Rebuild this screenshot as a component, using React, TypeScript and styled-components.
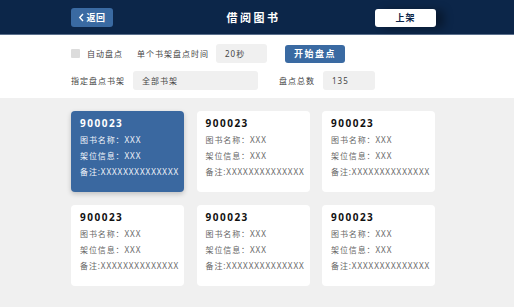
import styled, { createGlobalStyle } from 'styled-components'

const GlobalStyle = createGlobalStyle`
  html, body {
    margin: 0;
    padding: 0;
    background: #f0f0f0;
  }
  body {
    font-family: "Noto Sans", "Noto Sans CJK SC", sans-serif;
  }
`

const Page = styled.div`
  width: 514px;
  height: 307px;
  display: flex;
  flex-direction: column;
  background: #f0f0f0;
  overflow: hidden;
`

const Header = styled.header`
  height: 34px;
  display: grid;
  grid-template-columns: 1fr auto 1fr;
  align-items: center;
  padding: 0 78px 0 71px;
  background: #0c2649;
  border-bottom: 1px solid #5a6f8c;
`

const BackButton = styled.button`
  justify-self: start;
  width: 42px;
  height: 19px;
  display: flex;
  align-items: center;
  justify-content: center;
  gap: 1px;
  padding: 0;
  border: none;
  border-radius: 3px;
  background: #3a6aa2;
  color: #fff;
  font-family: inherit;
  font-size: 9px;
  font-weight: 700;
  letter-spacing: 0.5px;
`

const Title = styled.h1`
  margin: 0;
  color: #fff;
  font-size: 11px;
  font-weight: 700;
  letter-spacing: 2.5px;
`

const ShelfButton = styled.button`
  justify-self: end;
  width: 61px;
  height: 18px;
  margin-top: 1px;
  padding: 0;
  border: none;
  border-radius: 3px;
  background: #fff;
  color: #0c2649;
  font-family: inherit;
  font-size: 9px;
  font-weight: 700;
  letter-spacing: 1px;
  box-shadow: 8px 1px 8px rgba(0, 0, 0, 0.35);
`

const Toolbar = styled.section`
  background: #fff;
  display: flex;
  flex-direction: column;
  gap: 8px;
  padding: 9px 0 8px 71px;
`

const Row = styled.div`
  height: 19px;
  display: flex;
  align-items: center;
`

const Check = styled.span`
  width: 9px;
  height: 9px;
  border-radius: 1px;
  background: #dcdcdc;
  margin-right: 7px;
`

const Label = styled.span<{ $gap?: number }>`
  color: #444;
  font-size: 8px;
  letter-spacing: 1px;
  margin-right: ${p => p.$gap ?? 8}px;
  white-space: nowrap;
`

const Field = styled.div<{ $w: number; $gap?: number }>`
  width: ${p => p.$w}px;
  height: 19px;
  box-sizing: border-box;
  padding-left: 9px;
  display: flex;
  align-items: center;
  background: #f0f0f0;
  border-radius: 3px;
  color: #444;
  font-size: 8px;
  letter-spacing: 1px;
  margin-right: ${p => p.$gap ?? 0}px;
`

const StartButton = styled.button`
  width: 60px;
  height: 18px;
  padding: 0;
  border: none;
  border-radius: 3px;
  background: #3a6aa2;
  color: #fff;
  font-family: inherit;
  font-size: 9px;
  font-weight: 700;
  letter-spacing: 1.5px;
`

const Board = styled.main`
  flex: 1;
  display: grid;
  grid-template-columns: repeat(3, 113px);
  grid-auto-rows: 81px;
  gap: 13px 12.5px;
  padding: 13px 0 0 71px;
`

const Card = styled.div<{ $active?: boolean }>`
  display: flex;
  flex-direction: column;
  padding: 5px 0 0 9px;
  border-radius: 4px;
  background: ${p => (p.$active ? '#3a68a0' : '#fff')};
  box-shadow: ${p => (p.$active ? '0 2px 5px rgba(0, 0, 0, 0.2)' : 'none')};
  color: ${p => (p.$active ? '#f2f5fa' : '#666')};
`

const Code = styled.div<{ $active?: boolean }>`
  height: 14px;
  line-height: 14px;
  font-size: 10px;
  font-weight: 700;
  letter-spacing: 1.5px;
  color: ${p => (p.$active ? '#fff' : '#111')};
  margin-bottom: 2px;
`

const Line = styled.div`
  height: 16px;
  line-height: 16px;
  font-size: 8px;
  letter-spacing: 0.9px;
  white-space: nowrap;
`

const Chevron = () => (
  <svg width="7" height="9" viewBox="0 0 7 9">
    <path d="M5 1 L1.8 4.5 L5 8" fill="none" stroke="#fff" strokeWidth="1.4" />
  </svg>
)

const books = Array.from({ length: 6 }, (_, i) => ({ id: i, code: '900023' }))

export default function App() {
  return (
    <Page>
      <GlobalStyle />
      <Header>
        <BackButton>
          <Chevron />
          返回
        </BackButton>
        <Title>借阅图书</Title>
        <ShelfButton>上架</ShelfButton>
      </Header>
      <Toolbar>
        <Row>
          <Check />
          <Label $gap={14}>自动盘点</Label>
          <Label $gap={7}>单个书架盘点时间</Label>
          <Field $w={51} $gap={18}>20秒</Field>
          <StartButton>开始盘点</StartButton>
        </Row>
        <Row>
          <Label>指定盘点书架</Label>
          <Field $w={125} $gap={21}>全部书架</Field>
          <Label>盘点总数</Label>
          <Field $w={52}>135</Field>
        </Row>
      </Toolbar>
      <Board>
        {books.map((b, i) => (
          <Card key={b.id} $active={i === 0}>
            <Code $active={i === 0}>{b.code}</Code>
            <Line>图书名称：XXX</Line>
            <Line>架位信息：XXX</Line>
            <Line>备注:XXXXXXXXXXXXXX</Line>
          </Card>
        ))}
      </Board>
    </Page>
  )
}
